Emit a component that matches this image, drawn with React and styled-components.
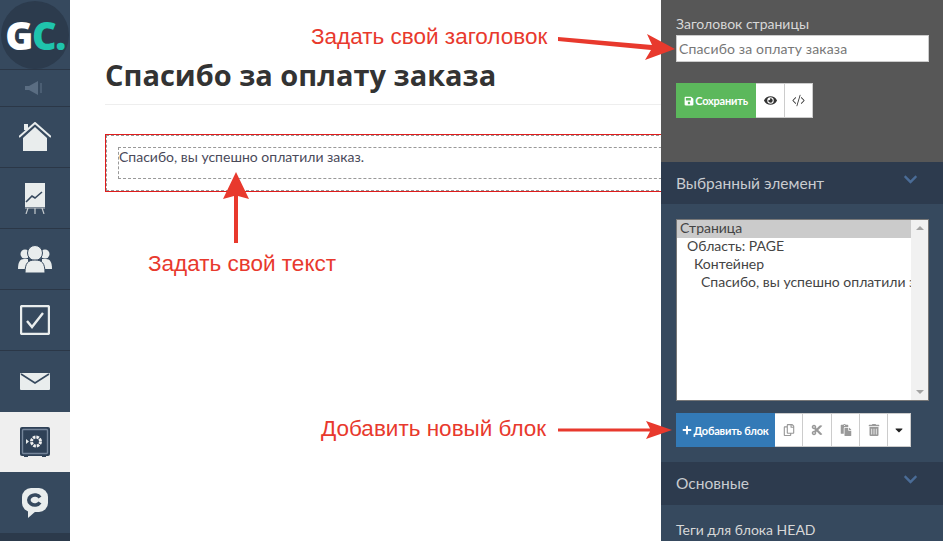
import React from "react"
import styled, { createGlobalStyle } from "styled-components"
import { FaSave, FaEye, FaRegCopy, FaCut, FaPaste, FaTrashAlt, FaCaretDown, FaPlus, FaChevronDown } from "react-icons/fa"
import { BsCodeSlash } from "react-icons/bs"

const GlobalStyle = createGlobalStyle`
    html, body {
        margin: 0;
        padding: 0;
        height: 100%;
        overflow: hidden;
    }
    body {
        font-family: "Lato", "Open Sans", "Liberation Sans", sans-serif;
        background: #fff;
    }
`;

const Page = styled.div`
    position: relative;
    display: flex;
    width: 943px;
    height: 541px;
    overflow: hidden;
`;

/* left menu */
const Sidebar = styled.nav`
    flex: 0 0 70px;
    display: flex;
    flex-direction: column;
    background: #2c3a4b;
`;

const MenuItem = styled.div`
    flex: none;
    height: ${(p) => p.$h}px;
    display: flex;
    align-items: center;
    justify-content: center;
    box-sizing: border-box;
    border-bottom: ${(p) => (p.$flat ? "none" : "1px solid #2b3747")};
    background: ${(p) => (p.$active ? "#efefef" : "#36495e")};
`;

const LogoCircle = styled.div`
    width: 68px;
    height: 68px;
    border-radius: 50%;
    background: #2c3b4d;
    display: flex;
    align-items: center;
    justify-content: center;
    font-family: "Open Sans", sans-serif;
    font-size: 38px;
    font-weight: 800;
    letter-spacing: -1.5px;
    color: #fff;
    span {
        color: #1fc4ac;
    }
`;

/* page content */
const Main = styled.main`
    flex: 1;
    min-width: 0;
    overflow: hidden;
    padding: 0 0 0 35px;
`;

const Title = styled.h1`
    margin: 0;
    height: 105px;
    width: 556px;
    box-sizing: border-box;
    padding-top: 56px;
    font-family: "Open Sans", sans-serif;
    font-size: 29px;
    line-height: 38px;
    font-weight: 700;
    color: #333;
    border-bottom: 1px solid #eee;
`;

const Block = styled.div`
    margin-top: 29px;
    width: 640px;
    height: 58px;
    box-sizing: border-box;
    border: 1px solid #e01c1c;
    padding: 12px;
    outline: 1px dashed #999;
    outline-offset: -2px;
`;

const BlockInner = styled.div`
    height: 32px;
    box-sizing: border-box;
    border: 1px dashed #999;
    font-size: 14px;
    line-height: 18px;
    color: #4a4a5a;
`;

/* right panel */
const Panel = styled.aside`
    flex: 0 0 282px;
    min-width: 0;
    overflow: hidden;
    display: flex;
    flex-direction: column;
    background: #36495e;
    color: #ddd;
    z-index: 1;
`;

const TopBox = styled.div`
    flex: none;
    height: 162px;
    box-sizing: border-box;
    padding: 15px 14px 0 15px;
    background: #575757;
`;

const FieldLabel = styled.div`
    font-size: 14px;
    line-height: 18px;
    color: #d8d8d8;
`;

const TitleInput = styled.div`
    margin-top: 2px;
    height: 27px;
    box-sizing: border-box;
    padding-left: 2px;
    border: 1px solid #ccc;
    background: #fff;
    color: #777;
    font-size: 14px;
    letter-spacing: 0.15px;
    line-height: 25px;
`;

const Toolbar = styled.div`
    display: flex;
    height: ${(p) => p.$h}px;
    margin-top: ${(p) => p.$top}px;
`;

const MainButton = styled.div`
    width: ${(p) => p.$w}px;
    display: flex;
    align-items: center;
    justify-content: center;
    gap: 1px;
    background: ${(p) => p.$bg};
    color: #fff;
    font-size: 11px;
    font-weight: 700;
    letter-spacing: -0.2px;
`;

const IconButton = styled.div`
    width: ${(p) => p.$w}px;
    display: flex;
    align-items: center;
    justify-content: center;
    box-sizing: border-box;
    border: 1px solid #ccc;
    border-left-width: 0;
    background: #fff;
    color: ${(p) => p.$color || "#999"};
    font-size: ${(p) => p.$size || 12}px;
`;

const SectionHead = styled.div`
    flex: none;
    height: ${(p) => p.$h}px;
    box-sizing: border-box;
    display: flex;
    justify-content: space-between;
    padding: ${(p) => p.$pad}px 25px 0 15px;
    background: #2d3b4e;
    font-size: 15.5px;
    line-height: 20px;
    color: #c9ccd0;
    svg {
        color: #4a6c97;
        font-size: 15px;
        margin-top: -1px;
    }
`;

const SectionBody = styled.div`
    flex: none;
    height: 258px;
    box-sizing: border-box;
    padding: 15px 14px 0 15px;
`;

const ListBox = styled.div`
    height: 182px;
    box-sizing: border-box;
    display: flex;
    border: 1px solid #777;
    background: #fff;
`;

const ListRows = styled.div`
    flex: 1;
    min-width: 0;
    overflow: hidden;
    white-space: nowrap;
`;

const ListRow = styled.div`
    height: 18px;
    padding-left: ${(p) => p.$indent}px;
    background: ${(p) => (p.$selected ? "#cbcbcb" : "transparent")};
    font-size: 14px;
    line-height: 16px;
    color: #444;
`;

const Scroll = styled.div`
    flex: 0 0 17px;
    display: flex;
    flex-direction: column;
    justify-content: space-between;
    align-items: center;
    padding: 6px 0;
    box-sizing: border-box;
    background: #f1f1f1;
`;

const ScrollArrow = styled.span`
    width: 0;
    height: 0;
    border-left: 4px solid transparent;
    border-right: 4px solid transparent;
    border-${(p) => (p.$up ? "bottom" : "top")}: 4px solid #a3a3a3;
`;

const TagsRow = styled.div`
    padding: 16px 15px;
    font-size: 14px;
    line-height: 18px;
    color: #d8d8d8;
`;

/* red hints over the page */
const Hint = styled.div`
    position: absolute;
    left: ${(p) => p.$x}px;
    top: ${(p) => p.$y}px;
    font-family: "Liberation Sans", Arial, sans-serif;
    font-size: 22.5px;
    line-height: 26px;
    color: #e8392d;
    white-space: nowrap;
    z-index: 3;
`;

const Arrows = styled.svg`
    position: absolute;
    left: 0;
    top: 0;
    z-index: 2;
    pointer-events: none;
`;

function App() {
    return (
        <Page>
            <GlobalStyle />
            <Sidebar>
                <MenuItem $h={70}>
                    <LogoCircle>G<span>C.</span></LogoCircle>
                </MenuItem>
                <MenuItem $h={37}>
                    <svg width="20" height="14" viewBox="0 0 20 14" fill="#5a6d82">
                        <path d="M0 5h4l9-5v14L4 9H0z" />
                        <rect x="15" y="2" width="2" height="10" opacity="0.6" />
                    </svg>
                </MenuItem>
                <MenuItem $h={61}>
                    <svg width="32" height="30" viewBox="0 0 32 30" fill="#e9eded">
                        <path d="M4 16L16 5l12 11v13H4z" />
                        <path d="M0 15L16 1l16 14" fill="none" stroke="#e9eded" strokeWidth="2" />
                        <rect x="5" y="2" width="4" height="6" />
                    </svg>
                </MenuItem>
                <MenuItem $h={61}>
                    <svg width="22" height="31" viewBox="0 0 22 31">
                        <rect x="1" y="0" width="20" height="24" fill="#e9eded" />
                        <path d="M2 19l6-6 3 2 7-6" fill="none" stroke="#36495e" strokeWidth="1.6" />
                        <path d="M1 25h20M4 25l-2 6M11 25v6M18 25l2 6" stroke="#c4cacd" strokeWidth="1.2" />
                    </svg>
                </MenuItem>
                <MenuItem $h={61}>
                    <svg width="34" height="28" viewBox="0 0 34 28" fill="#e9eded">
                        <circle cx="7" cy="9" r="4.5" />
                        <circle cx="27" cy="9" r="4.5" />
                        <path d="M0 24c0-7 2-10 6-10h4v10z" />
                        <path d="M34 24c0-7-2-10-6-10h-4v10z" />
                        <circle cx="17" cy="8" r="7.5" stroke="#36495e" strokeWidth="1" />
                        <path d="M7 28c0-10 3-13 10-13s10 3 10 13z" stroke="#36495e" strokeWidth="1" />
                    </svg>
                </MenuItem>
                <MenuItem $h={61}>
                    <svg width="30" height="30" viewBox="0 0 30 30">
                        <rect x="1" y="1" width="28" height="28" rx="1.5" fill="#36495e" stroke="#e9eded" strokeWidth="2.4" />
                        <path d="M7 16l5 6 11-14" fill="none" stroke="#e9eded" strokeWidth="2.4" />
                    </svg>
                </MenuItem>
                <MenuItem $h={61} $flat>
                    <svg width="30" height="18" viewBox="0 0 30 18">
                        <rect x="0" y="0" width="30" height="17" rx="1" fill="#e9eded" />
                        <path d="M1 1l14 9L29 1" fill="none" stroke="#36495e" strokeWidth="1.6" />
                    </svg>
                </MenuItem>
                <MenuItem $h={60} $flat $active>
                    <svg width="30" height="30" viewBox="0 0 30 30">
                        <rect x="0" y="0" width="30" height="29" rx="2" fill="#2f4157" />
                        <rect x="2.5" y="2.5" width="25" height="24" rx="1" fill="#2f4157" stroke="#75859a" strokeWidth="1.4" />
                        <circle cx="16" cy="14.500" r="4.500" fill="none" stroke="#f0f0f0" strokeWidth="3" strokeDasharray="2.600 0.900" />
                        <path d="M6 12l3 2.500-3 2.500z" fill="#e9eded" />
                        <path d="M4 29h4M22 29h4" stroke="#2f4157" strokeWidth="2" />
                    </svg>
                </MenuItem>
                <MenuItem $h={61} $flat>
                    <svg width="26" height="30" viewBox="0 0 26 30">
                        <rect x="0" y="0" width="26" height="24" rx="9" fill="#e9eded" />
                        <path d="M6 22v8l8-7z" fill="#e9eded" />
                        <path d="M18 9.500a6 5 0 1 0 0 5" fill="none" stroke="#36495e" strokeWidth="3.6" />
                    </svg>
                </MenuItem>
            </Sidebar>

            <Main>
                <Title>Спасибо за оплату заказа</Title>
                <Block>
                    <BlockInner>Спасибо, вы успешно оплатили заказ.</BlockInner>
                </Block>
            </Main>

            <Panel>
                <TopBox>
                    <FieldLabel>Заголовок страницы</FieldLabel>
                    <TitleInput>Спасибо за оплату заказа</TitleInput>
                    <Toolbar $h={35} $top={21}>
                        <MainButton $w={80} $bg="#5cb85c"><FaSave size={10} />Сохранить</MainButton>
                        <IconButton $w={29} $color="#333" $size={13}><FaEye /></IconButton>
                        <IconButton $w={28} $color="#333" $size={13}><BsCodeSlash /></IconButton>
                    </Toolbar>
                </TopBox>
                <SectionHead $h={42} $pad={11}>Выбранный элемент<FaChevronDown /></SectionHead>
                <SectionBody>
                    <ListBox>
                        <ListRows>
                            <ListRow $indent={3} $selected>Страница</ListRow>
                            <ListRow $indent={10}>Область: PAGE</ListRow>
                            <ListRow $indent={17}>Контейнер</ListRow>
                            <ListRow $indent={24}>Спасибо, вы успешно оплатили заказ.</ListRow>
                        </ListRows>
                        <Scroll><ScrollArrow $up /><ScrollArrow /></Scroll>
                    </ListBox>
                    <Toolbar $h={34} $top={12}>
                        <MainButton $w={99} $bg="#337ab7"><FaPlus size={10} />Добавить блок</MainButton>
                        <IconButton $w={28}><FaRegCopy /></IconButton>
                        <IconButton $w={29}><FaCut /></IconButton>
                        <IconButton $w={28}><FaPaste /></IconButton>
                        <IconButton $w={28}><FaTrashAlt /></IconButton>
                        <IconButton $w={23} $color="#222"><FaCaretDown /></IconButton>
                    </Toolbar>
                </SectionBody>
                <SectionHead $h={43} $pad={11}>Основные<FaChevronDown /></SectionHead>
                <TagsRow>Теги для блока HEAD</TagsRow>
            </Panel>

            <Hint $x={311} $y={24}>Задать свой заголовок</Hint>
            <Hint $x={148} $y={251}>Задать свой текст</Hint>
            <Hint $x={321} $y={416}>Добавить новый блок</Hint>

            <Arrows width="943" height="541" viewBox="0 0 943 541" fill="#e8392d">
                <path d="M558 37L652 45 647 34 675 49 645 60 651 50 558 41z" />
                <path d="M234 243V196L223 199 236 172 249 199 238 196V243z" />
                <path d="M558 428.500H650L646 421 672 430 646 439 650 431.500H558z" />
            </Arrows>
        </Page>
    )
}

export default App
